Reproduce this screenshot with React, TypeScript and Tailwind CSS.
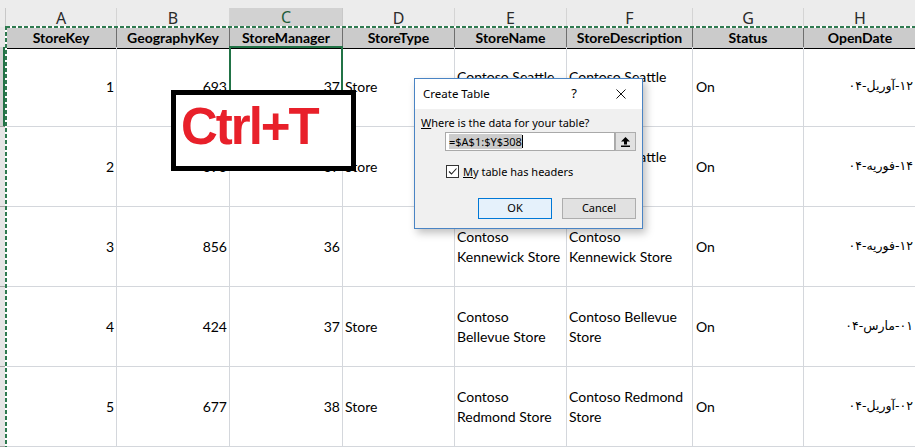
import React from 'react'

const cols = ['A', 'B', 'C', 'D', 'E', 'F', 'G', 'H']
const heads = ['StoreKey', 'GeographyKey', 'StoreManager', 'StoreType', 'StoreName', 'StoreDescription', 'Status', 'OpenDate']
const grid = 'grid grid-cols-[6px_111px_113px_113px_112px_112px_126px_111px_113px]'

type Row = {
  k: string
  g: string
  m: string
  t: string
  n: string[]
  d: string[]
  o: string
}

const rows: Row[] = [
  { k: '1', g: '693', m: '37', t: 'Store', n: ['Contoso Seattle', 'No.1 Store'], d: ['Contoso Seattle', 'No.1 Store'], o: '۱۲-آوریل-۰۴' },
  { k: '2', g: '693', m: '37', t: 'Store', n: ['Contoso Seattle', 'No.2 Store'], d: ['Contoso Seattle', 'No.2 Store'], o: '۱۴-فوریه-۰۴' },
  { k: '3', g: '856', m: '36', t: '', n: ['Contoso', 'Kennewick Store'], d: ['Contoso', 'Kennewick Store'], o: '۱۲-فوریه-۰۴' },
  { k: '4', g: '424', m: '37', t: 'Store', n: ['Contoso', 'Bellevue Store'], d: ['Contoso Bellevue', 'Store'], o: '۰۱-مارس-۰۴' },
  { k: '5', g: '677', m: '38', t: 'Store', n: ['Contoso', 'Redmond Store'], d: ['Contoso Redmond', 'Store'], o: '۰۲-آوریل-۰۴' },
]

const cell = 'flex h-[80px] items-center border-r border-b border-[#d4d7dc] overflow-visible whitespace-nowrap'

const Lines = ({ lines }: { lines: string[] }) => (
  <div className="flex flex-col leading-[20px]">
    {lines.map((l) => (
      <span key={l}>{l}</span>
    ))}
  </div>
)

const CreateTableDialog = () => (
  <div className="absolute left-[414px] top-[78px] flex h-[151px] w-[229px] flex-col border border-[#4a84c4] bg-white font-['Noto_Sans',sans-serif] text-[11px] text-black shadow-[3px_4px_8px_rgba(0,0,0,0.25)]">
    <div className="flex h-[30px] items-center pl-[8px] pr-[16px] text-[11.5px]">
      <span>Create Table</span>
      <span className="ml-auto text-[13px]">?</span>
      <svg className="ml-[39px]" width="10" height="10" viewBox="0 0 10 10">
        <path d="M0.5 0.5 L9.5 9.5 M9.5 0.5 L0.5 9.5" stroke="#111" strokeWidth="1" />
      </svg>
    </div>
    <div className="flex flex-1 flex-col bg-[#f0f0f0]">
      <div className="ml-[6px] mt-[6px] h-[16px] leading-[16px]">
        <span className="underline">W</span>here is the data for your table?
      </div>
      <div className="ml-[30px] mt-[1px] flex h-[19px]">
        <div className="flex w-[170px] items-center border border-[#a9a9a9] bg-white pl-[3px]">
          <span className="bg-[#cccccc] leading-[15px]">=$A$1:$Y$308</span>
          <span className="h-[13px] w-px bg-black" />
        </div>
        <div className="flex w-[21px] items-center justify-center border border-[#adadad] bg-[#e1e1e1]">
          <svg width="9" height="10" viewBox="0 0 9 10">
            <path d="M4.5 0 L9 4.5 L6 4.5 L6 7.5 L3 7.5 L3 4.5 L0 4.5 Z" fill="#000" />
            <rect x="0" y="8.5" width="9" height="1.5" fill="#000" />
          </svg>
        </div>
      </div>
      <div className="ml-[31px] mt-[14px] flex h-[13px] items-center gap-[4px]">
        <div className="h-[13px] w-[13px] border border-[#333] bg-white">
          <svg width="11" height="11" viewBox="0 0 11 11">
            <path d="M2 5.5 L4.5 8 L9.5 2.5" stroke="#222" strokeWidth="1.1" fill="none" />
          </svg>
        </div>
        <span className="leading-[16px]">
          <span className="underline">M</span>y table has headers
        </span>
      </div>
      <div className="mt-[20px] flex h-[21px] gap-[10px] pl-[63px]">
        <div className="flex w-[74px] items-center justify-center border border-[#0078d7] bg-[#e5f1fb]">OK</div>
        <div className="flex w-[74px] items-center justify-center border border-[#adadad] bg-[#e1e1e1]">Cancel</div>
      </div>
    </div>
  </div>
)

export default function App() {
  return (
    <div className="relative h-[447px] w-[915px] overflow-hidden bg-white font-[Lato,sans-serif] text-[14px] text-black">
      <div className="h-[8px] bg-[#ececec]" />

      {/* column letters */}
      <div className={`${grid} h-[19px] bg-[#ececec] font-['Noto_Sans',sans-serif] text-[16px] leading-[18px] text-[#2a2a2a]`}>
        <div className="border-r border-[#c8c8c8]" />
        {cols.map((c) => (
          <div
            key={c}
            className={
              c === 'C'
                ? 'flex items-center justify-center border-r border-b-2 border-[#c8c8c8] border-b-[#217346] bg-[#d2d2d2] text-[#1e5c3a]'
                : 'flex items-center justify-center border-r border-[#d4d4d4]'
            }
          >
            {c}
          </div>
        ))}
      </div>

      {/* header row */}
      <div className={`${grid} h-[20px]`}>
        <div className="border-b border-[#a0a0a0] bg-[#e6e6e6]" />
        {heads.map((h) => (
          <div
            key={h}
            className="flex items-center justify-center border-r border-b border-r-[#6f6f6f] border-b-black bg-[#cbcbcb] font-bold whitespace-nowrap"
          >
            {h}
          </div>
        ))}
      </div>

      {rows.map((r, i) => (
        <div key={r.k} className={`${grid}`}>
          <div className={`h-[80px] border-b border-[#a8a8a8] ${i === 0 ? 'bg-[#d2d2d2] border-r-[3px] border-r-[#217346]' : 'bg-[#e6e6e6]'}`} />
          <div className={`${cell} justify-end pr-[2px]`}>{r.k}</div>
          <div className={`${cell} justify-end pr-[2px]`}>{r.g}</div>
          <div className={`${cell} relative justify-end pr-[2px]`}>
            {r.m}
            {i === 0 && <div className="absolute -left-px -top-px bottom-[-1px] right-[-1px] border-2 border-[#217346]" />}
          </div>
          <div className={`${cell} pl-[2px]`}>{r.t}</div>
          <div className={`${cell} pl-[2px]`}>
            <Lines lines={r.n} />
          </div>
          <div className={`${cell} pl-[2px]`}>
            <Lines lines={r.d} />
          </div>
          <div className={`${cell} pl-[3px]`}>On</div>
          <div className={`${cell} justify-end pr-[3px] font-['DejaVu_Sans',sans-serif] text-[12.5px]`}>
            <span dir="rtl">{r.o}</span>
          </div>
        </div>
      ))}

      {/* copy marquee */}
      <div className="absolute left-[6px] right-0 top-[26px] h-[2px] bg-[repeating-linear-gradient(90deg,#2f7a50_0_4px,#ffffff_4px_6px)]" />
      <div className="absolute bottom-0 left-[5px] top-[26px] w-[2px] bg-[repeating-linear-gradient(180deg,#2f7a50_0_4px,#ffffff_4px_6px)]" />

      {/* shortcut label */}
      <div className="absolute left-[171px] top-[90px] h-[81px] w-[185px] border-[5px] border-black bg-white pl-[5px] pt-[6px]">
        <span className="block font-['Liberation_Sans',Arial,sans-serif] text-[51px] font-bold leading-[51px] tracking-[-2px] text-[#e8202a]">
          Ctrl+T
        </span>
      </div>

      <CreateTableDialog />
    </div>
  )
}
